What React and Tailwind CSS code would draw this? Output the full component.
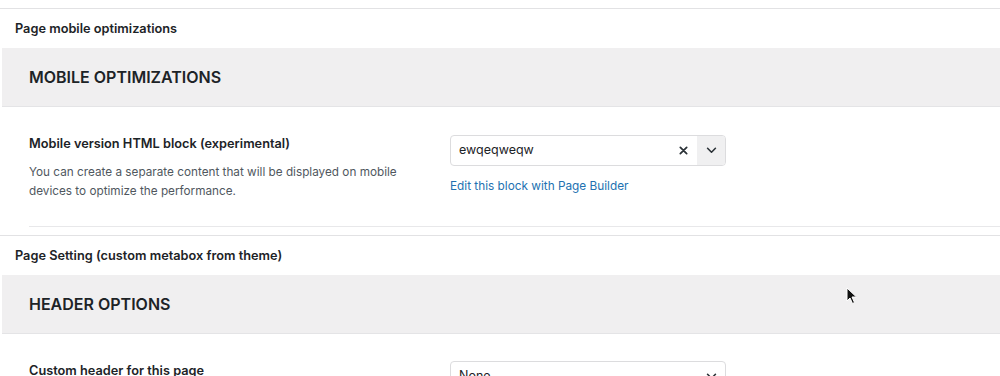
import React from "react";

function Select({ value, clearable }) {
  return (
    <div className="flex h-[31px] w-[276px] rounded-[4px] border border-[#dcdcde] bg-white overflow-hidden">
      <div className="flex flex-1 items-center pl-[8px] text-[12.5px] text-[#1d2327]">{value}</div>
      {clearable && (
        <div className="flex w-[28px] items-center justify-center">
          <svg width="9" height="9" viewBox="0 0 10 10">
            <path d="M1.5 1.5 L8.5 8.5 M8.5 1.5 L1.5 8.5" stroke="#2c3338" strokeWidth="2" strokeLinecap="round" />
          </svg>
        </div>
      )}
      <div className={"flex w-[28px] items-center justify-center " + (clearable ? "bg-[#f0f0f1]" : "")}>
        <svg width="11" height="7" viewBox="0 0 12 8">
          <path d="M1.5 1.5 L6 6 L10.5 1.5" stroke="#2c3338" strokeWidth="1.8" fill="none" strokeLinecap="round" strokeLinejoin="round" />
        </svg>
      </div>
    </div>
  );
}

function SectionTitle({ children }) {
  return (
    <div className="flex h-[39px] items-center px-[15px] text-[12.75px] font-semibold text-[#1d2327]">{children}</div>
  );
}

function Band({ children }) {
  return (
    <div className="ml-[2px] flex h-[59px] items-center border-b border-[#e4e4e6] bg-[#f0eff0] pl-[27px] text-[16px] font-semibold text-[#1d2327]">
      {children}
    </div>
  );
}

export default function App() {
  return (
    <div className="relative h-[376px] w-[1000px] overflow-hidden bg-white" style={{ fontFamily: "Inter, 'Noto Sans', sans-serif" }}>
      <div className="h-[9px] border-b border-[#e2e2e4]" />
      <SectionTitle>Page mobile optimizations</SectionTitle>
      <Band>MOBILE OPTIMIZATIONS</Band>
      <div className="flex pt-[29px] pl-[29px]">
        <div className="w-[421px]">
          <div className="text-[12.75px] font-semibold text-[#1d2327] leading-[16px]">Mobile version HTML block (experimental)</div>
          <div className="mt-[11px] w-[385px] text-[11.75px] leading-[19px] text-[#50575e]">
            You can create a separate content that will be displayed on mobile devices to optimize the performance.
          </div>
        </div>
        <div className="-mt-[1px]">
          <Select value="ewqeqweqw" clearable />
          <div className="mt-[12px] text-[11.8px] text-[#2271b1]">Edit this block with Page Builder</div>
        </div>
      </div>
      <div className="ml-[29px] mt-[25px] border-b border-[#e8e8ea]" />
      <div className="mt-[8px] border-b border-[#e2e2e4]" />
      <SectionTitle>Page Setting (custom metabox from theme)</SectionTitle>
      <Band>HEADER OPTIONS</Band>
      <div className="flex pt-[27px] pl-[29px]">
        <div className="w-[421px] pt-[2px]">
          <div className="text-[12.75px] font-semibold text-[#1d2327] leading-[16px]">Custom header for this page</div>
        </div>
        <div>
          <Select value="None" />
        </div>
      </div>
      <svg className="absolute left-[846px] top-[287px]" width="12" height="18" viewBox="0 0 12 18">
        <path d="M1 1 L1 14 L4 11 L6.5 16.5 L8.5 15.5 L6 10 L10.5 10 Z" fill="#111" stroke="#fff" strokeWidth="1" strokeLinejoin="round" />
      </svg>
    </div>
  );
}
